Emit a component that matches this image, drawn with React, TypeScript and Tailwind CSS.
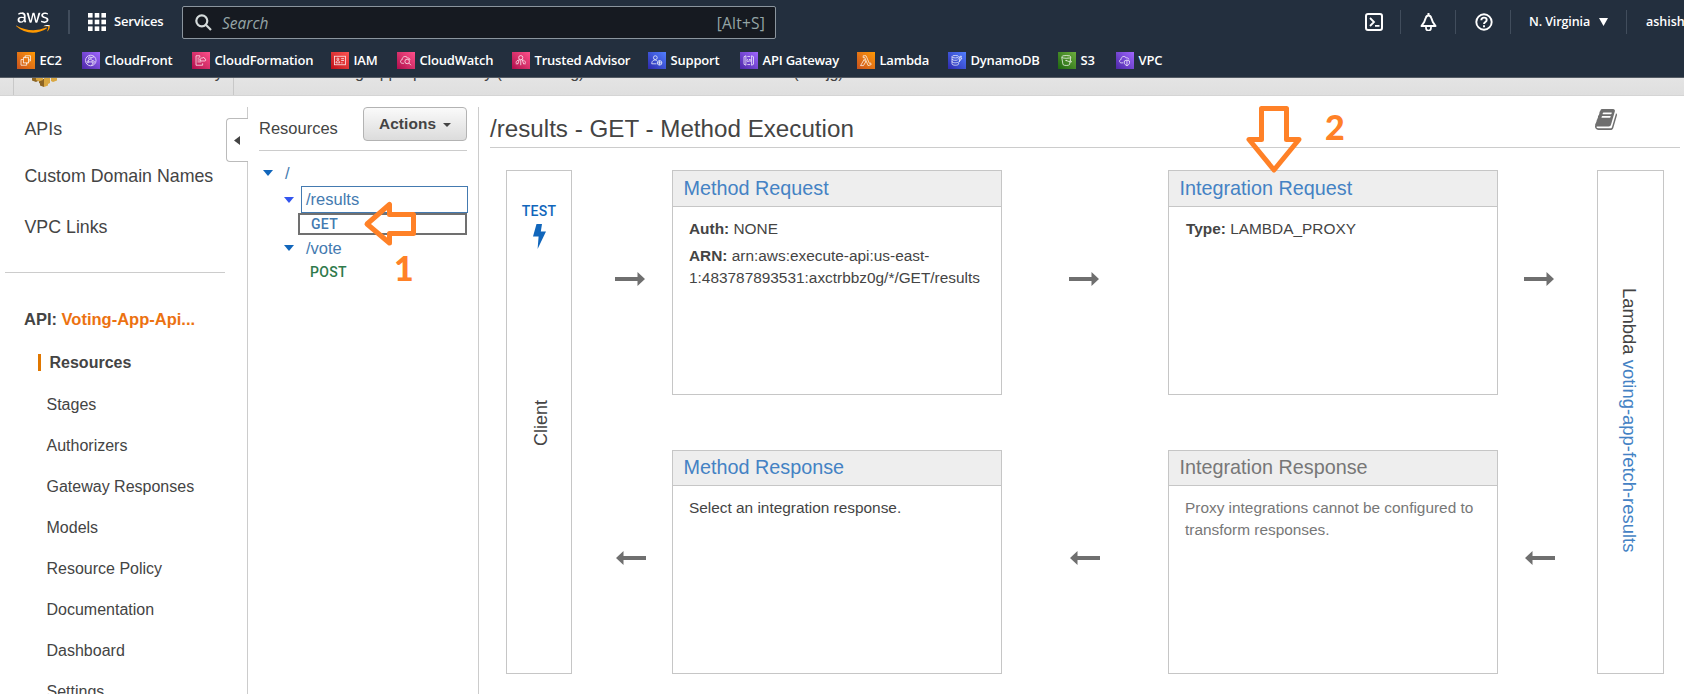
import React from "react";
import { FaAws } from "react-icons/fa";

const ember = "font-['Open_Sans','Noto_Sans',sans-serif]";

type Service = { name: string; cell: string; tone: string; glyph: React.ReactNode };

const services: Service[] = [
  {
    name: "EC2", cell: "w-[65px]", tone: "from-[#c8511b] to-[#ff9900]",
    glyph: <><rect x="6.5" y="6" width="5.5" height="5.5" /><path d="M6.5 8H4v6h6v-2.5M8.5 6V4H14v5.500h-2M8 6V4.800M10 11.500v1.200M12 8h1.200" /></>,
  },
  {
    name: "CloudFront", cell: "w-[110px]", tone: "from-[#4d27a8] to-[#a166ff]",
    glyph: <><circle cx="9" cy="9" r="5.600" /><circle cx="8" cy="6.500" r="1.300" /><circle cx="6" cy="10.500" r="1" /><circle cx="11.500" cy="10.500" r="1.300" /><path d="M9 7.500l2 2M7.300 7.700L6.400 9.500M7 10.500h3M9.300 6.200l3-1.200M11 12l-1 2.400" /></>,
  },
  {
    name: "CloudFormation", cell: "w-[139px]", tone: "from-[#b0084d] to-[#ff4f8b]",
    glyph: <><path d="M8 4H4v10h7v-2M5.500 6.500h2M5.500 8.500h3M5.500 10.500h4M8 4v2" /><path d="M9 9.500c-1.500-2 .5-3.500 1.500-3C11.500 5 13.500 6 13.300 7.300c1.500.3 1.200 2.200 0 2.200z" /></>,
  },
  {
    name: "IAM", cell: "w-[66px]", tone: "from-[#bd0816] to-[#ff5252]",
    glyph: <><rect x="3.500" y="4.500" width="11.500" height="9" /><circle cx="7" cy="7.500" r="1.100" /><path d="M5 11.500c0-3 4-3 4 0zM10.500 7h3M10.500 9h3M10.500 11.500h1.500" /></>,
  },
  {
    name: "CloudWatch", cell: "w-[115px]", tone: "from-[#b0084d] to-[#ff4f8b]",
    glyph: <><path d="M7 12H5.500c-2.500 0-2.800-3.500-.3-3.800C5 4.500 9.500 3.500 11 6.500c1.800-.4 2.500.8 2.300 2" /><circle cx="10.500" cy="10" r="2.400" /><path d="M12.300 11.700l2.300 2.300" /></>,
  },
  {
    name: "Trusted Advisor", cell: "w-[136px]", tone: "from-[#b0084d] to-[#ff4f8b]",
    glyph: <><circle cx="9" cy="6" r="2.200" /><path d="M7.500 8L6 12.500M10.500 8l1.500 4.500M9 8.200V14M4 11.500c0-2 2-3 3-3M14 11.500c0-2-2-3-3-3M3.700 12.500h2.500M11.800 12.500h2.500" /></>,
  },
  {
    name: "Support", cell: "w-[92px]", tone: "from-[#2e27ad] to-[#527fff]",
    glyph: <><circle cx="7.500" cy="6" r="2" /><path d="M3.700 12.500c0-4.500 4-4.700 5.800-3M3.700 12.500h5" /><circle cx="12" cy="11.500" r="2.400" /><path d="M12 9.200v4.500M9.800 11.500h4.500" /></>,
  },
  {
    name: "API Gateway", cell: "w-[117px]", tone: "from-[#4d27a8] to-[#a166ff]",
    glyph: <><path d="M6 4L4 5v8l2 1zM12 4l2 1v8l-2 1zM7.500 4.700h3M7.500 13.300h3M8 7.500L7.200 9 8 10.500M10 7.500L8.800 10.500M10.300 7.500l.8 1.500-.8 1.500" /></>,
  },
  {
    name: "Lambda", cell: "w-[91px]", tone: "from-[#c8511b] to-[#ff9900]",
    glyph: <path d="M6.300 4h3l3.500 8 1.400-.4.500 1.800-3.200 1L8 6H6.300zM7.400 7.800L3.500 14.400H6.600l2.300-3.800z" />,
  },
  {
    name: "DynamoDB", cell: "w-[110px]", tone: "from-[#2e27ad] to-[#527fff]",
    glyph: <><ellipse cx="7.500" cy="5" rx="3.500" ry="1.300" /><path d="M4 5v7.500c0 2 7 2 7 0V11M4 7.500c0 1.600 5 1.600 6 .8M4 10c0 1.700 5 1.700 6.500.8M12.500 4.500l-1.500 3h1.500l-1 3 3-4H13l1-2z" /></>,
  },
  {
    name: "S3", cell: "w-[58px]", tone: "from-[#1b660f] to-[#6cae3e]",
    glyph: <><ellipse cx="8.500" cy="5.200" rx="4.800" ry="1.500" /><path d="M3.700 5.500l1.300 7.800c1 1.300 6 1.300 7 0l1.300-7.800M8.500 9l4 1.500c2 .6 2-.4.300-1.500" /><circle cx="8.300" cy="9" r=".4" /></>,
  },
  {
    name: "VPC", cell: "w-[60px]", tone: "from-[#4d27a8] to-[#a166ff]",
    glyph: <><path d="M7.500 11.500H5.300c-2.300 0-2.500-3.300-.2-3.500C4.900 4.500 9.300 3.600 10.600 6.300c1.900-.3 2.700.5 2.700 1.700" /><path d="M11.300 8.500l2.700 1v2c0 1.300-1 2.200-2.700 3-1.700-.8-2.700-1.700-2.700-3v-2zM11.300 8.500v6" /></>,
  },
];

const Divider = ({ className = "w-px" }: { className?: string }) => (
  <div className={`h-6 shrink-0 bg-[#414d5c] ${className}`} />
);

function TopBar() {
  return (
    <div className="flex h-10 items-start">
      <div className="ml-[16px] mt-[9px] w-[35px] shrink-0">
        <svg width="0" height="0" className="block">
          <defs>
            <linearGradient id="awsTone" x1="0" y1="0" x2="0" y2="1">
              <stop offset="0.67" stopColor="#ffffff" />
              <stop offset="0.67" stopColor="#ff9900" />
            </linearGradient>
          </defs>
        </svg>
        <FaAws className="block h-[27px] w-[34px] fill-[url(#awsTone)]" />
      </div>
      <Divider className="ml-[17px] mt-[10px] w-[2px]" />
      <svg className="ml-[18px] mt-[13px] h-[18px] w-[18px] shrink-0 fill-white" viewBox="0 0 18 18">
        {[0, 6.7, 13.400].map((y) => [0, 6.7, 13.400].map((x) => <rect key={`${x}-${y}`} x={x} y={y} width="4.600" height="4.600" />))}
      </svg>
      <span className="ml-2 mt-[11px] w-[68px] shrink-0 whitespace-nowrap text-[13px] font-semibold leading-[21px] tracking-[-0.200px]">Services</span>
      <div className="mt-[6px] flex h-[33px] w-[594px] shrink-0 items-center rounded-[2px] border border-[#8b959e] bg-[#161a21] pl-3 pr-[10px]">
        <svg className="h-[17px] w-[17px] fill-none stroke-[#d5dbdb]" viewBox="0 0 17 17" strokeWidth="2.200">
          <circle cx="6.800" cy="6.800" r="5.500" />
          <path d="M10.800 10.800L16 16" />
        </svg>
        <span className="ml-[10px] text-[15.500px] italic leading-5 text-[#95a5a6]">Search</span>
        <span className="ml-auto text-[15.500px] leading-5 tracking-[0.200px] text-[#95a5a6]">[Alt+S]</span>
      </div>
      <svg className="ml-[589px] mt-[13px] h-[18px] w-[18px] shrink-0 fill-none stroke-white" viewBox="0 0 18 18" strokeWidth="2">
        <rect x="1" y="1" width="16" height="16" rx="2" />
        <path d="M5 5l4 4-4 4M10 12.800h4.500" strokeWidth="1.800" />
      </svg>
      <Divider className="ml-[17px] mt-[10px] w-px" />
      <svg className="ml-[19px] mt-[13px] h-[18px] w-[17px] shrink-0 fill-none stroke-white" viewBox="0 0 17 18" strokeWidth="2" strokeLinejoin="round">
        <path d="M8.500 0v2.500M1.500 13h14l-2.700-4L11.300 5q-.8-2.500-2.800-2.500T5.700 5L4.200 9z" />
        <path d="M6 14v1a2.500 2.500 0 0 0 5 0v-1" strokeWidth="1.700" />
      </svg>
      <Divider className="ml-[18px] mt-[10px] w-px" />
      <svg className="ml-[19px] mt-[13px] h-[18px] w-[18px] shrink-0 fill-none stroke-white" viewBox="0 0 18 18" strokeWidth="1.900">
        <circle cx="9" cy="9" r="7.700" />
        <path d="M6.300 7.200c0-3.500 5.400-3.300 5.400-.2 0 2-2.700 1.900-2.700 4M9 12.200v2" />
      </svg>
      <Divider className="ml-[17px] mt-[10px] w-px" />
      <span className="ml-[18px] mt-[11px] w-[65px] shrink-0 whitespace-nowrap text-[12.500px] font-semibold leading-[21px] tracking-[-0.100px]">N. Virginia</span>
      <svg className="ml-[5px] mt-[18px] h-[8px] w-[9px] shrink-0 fill-white" viewBox="0 0 9 8"><path d="M0 0h9L4.500 8z" /></svg>
      <Divider className="ml-[18px] mt-[10px] w-px" />
      <span className="ml-[19px] mt-[11px] shrink-0 whitespace-nowrap text-[12.500px] font-semibold leading-[21px]">ashish</span>
    </div>
  );
}

function Favorites() {
  return (
    <div className="mt-[12px] flex pl-[17px]">
      {services.map((s) => (
        <div key={s.name} className={`flex shrink-0 items-center ${s.cell}`}>
          <svg className={`h-[17px] w-[17.500px] shrink-0 bg-linear-to-tr fill-none stroke-white/85 ${s.tone}`} viewBox="0 0 18 18" strokeWidth="0.900">
            {s.glyph}
          </svg>
          <span className="ml-[5px] whitespace-nowrap text-[13px] font-semibold leading-[17px] tracking-[-0.200px]">{s.name}</span>
        </div>
      ))}
    </div>
  );
}

function Breadcrumbs() {
  return (
    <div className="flex h-[18px] items-start overflow-hidden border-b border-[#d5d5d5] bg-linear-to-b from-[#e4e4e4] to-[#dfdfdf] text-base leading-5 text-[#444]">
      <div className="ml-[13px] h-[18px] w-px bg-[#c8c8c8]" />
      <svg className="ml-[18px] h-[9px] w-[25px]" viewBox="0 0 25 9">
        <path d="M0 0h6v3L4 4 0 2.500zM7 1h5v8l-4-1.500V5L7 5.500z" fill="#8c6423" />
        <path d="M19 0h6v2.500l-4 1.500-2-1zM12 0h6v5l-2 1v1.500L12 9z" fill="#d9a741" />
        <path d="M4 0h7v2l-4 1.500L4 2z" fill="#d9a741" />
      </svg>
      <span className="-mt-[15px] ml-[10px] w-[166px] whitespace-nowrap">Amazon API Gateway</span>
      <div className="h-[18px] w-px bg-[#c8c8c8]" />
      <span className="-mt-[15px] ml-[18px] w-[68px] whitespace-nowrap">APIs</span>
      <span className="-mt-[15px] w-[275px] whitespace-nowrap tracking-[-0.100px]">Voting-App-Api Gateway (axctrbbz0g)</span>
      <span className="-mt-[15px] ml-[22px] w-[122px] whitespace-nowrap">Resources</span>
      <span className="-mt-[15px] whitespace-nowrap tracking-[-0.200px]">/results (zw8jg)</span>
    </div>
  );
}

const sections = ["Stages", "Authorizers", "Gateway Responses", "Models", "Resource Policy", "Documentation", "Dashboard", "Settings"];

function Sidebar() {
  return (
    <nav className="flex h-full w-[226px] shrink-0 flex-col text-[#444]">
      <div className="mt-[21px] pl-[24.500px] text-[17.800px] leading-6">
        <div>APIs</div>
        <div className="mt-[23px] whitespace-nowrap">Custom Domain Names</div>
        <div className="mt-[27px]">VPC Links</div>
      </div>
      <div className="ml-[5px] mt-[33px] h-px w-[220px] shrink-0 bg-[#ccc]" />
      <div className="mt-[34px] whitespace-nowrap pl-[24px] text-[16.500px] font-bold leading-6">
        API: <span className="text-[#ec7211]">Voting-App-Api...</span>
      </div>
      <div className="mt-[11px] flex h-[41px] shrink-0 items-center pl-[38px]">
        <span className="h-[17px] w-[3px] bg-[#e07700]" />
        <span className="ml-[8.500px] text-base font-bold">Resources</span>
      </div>
      <div className="pt-px">
        {sections.map((s) => (
          <div key={s} className="flex h-[41px] shrink-0 items-center pl-[46.500px] text-base">{s}</div>
        ))}
      </div>
    </nav>
  );
}

function CollapseRail() {
  return (
    <div className="mt-[11px] flex w-[22px] shrink-0 flex-col">
      <div className="h-[11px] border-r border-[#ccc]" />
      <div className="flex h-[44px] items-center rounded-l-[4px] border-y border-l border-[#bbb] pl-[7px]">
        <svg className="h-[9px] w-[6px] fill-[#444]" viewBox="0 0 6 9"><path d="M6 0v9L0 4.500z" /></svg>
      </div>
      <div className="flex-1 border-r border-[#ccc]" />
    </div>
  );
}

const Caret = ({ className }: { className: string }) => (
  <svg className={`h-[6px] w-[10px] shrink-0 ${className}`} viewBox="0 0 10 6"><path d="M0 0h10L5 6z" /></svg>
);

const verb = "font-[Roboto,sans-serif] text-sm font-medium tracking-[0.300px]";

function ResourceTree() {
  return (
    <section className="mt-[11px] flex w-[231px] shrink-0 flex-col border-r border-[#ccc] pl-[11px] text-[#444]">
      <div className="flex h-[44px] w-[208px] items-start border-b border-[#ccc]">
        <span className="mt-[9px] text-[16.500px] leading-6">Resources</span>
        <button className="ml-auto flex h-[34px] w-[104px] items-center rounded-[4px] border border-[#b3b3b3] bg-linear-to-b from-[#fafafa] to-[#dcdcdc] pb-px pl-[15px] text-[15.400px] font-bold tracking-[0.100px]">
          Actions
          <svg className="ml-[7px] mt-[3px] h-[4px] w-[8px] fill-[#444]" viewBox="0 0 8 4"><path d="M0 0h8L4 4z" /></svg>
        </button>
      </div>
      <div className="mt-[9px] flex h-[26px] items-center pl-1 text-[16.500px] text-[#447ab0]">
        <Caret className="fill-[#1166bb]" />
        <span className="ml-3">/</span>
      </div>
      <div className="flex h-[27px] items-center pl-[25px] text-[16.500px] text-[#447ab0]">
        <Caret className="fill-[#3355ee]" />
        <span className="ml-[7px] flex h-[27px] w-[167px] items-center border border-[#447ab0] pl-1">/results</span>
      </div>
      <div className={`ml-[39px] flex h-[22px] w-[169px] items-center border-2 border-[#707070] pb-px pl-[11px] text-[#447ab0] ${verb}`}>GET</div>
      <div className="mt-[1px] flex h-[24px] items-center pl-[25px] text-[16.500px] text-[#447ab0]">
        <Caret className="fill-[#1166bb]" />
        <span className="ml-3">/vote</span>
      </div>
      <div className={`flex h-[23px] items-center pl-[51px] text-[#2f7a4c] ${verb}`}>POST</div>
    </section>
  );
}

const Arrow = ({ left = false, className }: { left?: boolean; className: string }) => (
  <div className={`flex items-center ${left ? "h-[216px]" : "h-[217px]"} ${className}`}>
    <svg className={`h-[14px] w-[30px] fill-[#6f6f6f] ${left ? "rotate-180" : ""}`} viewBox="0 0 30 14">
      <path d="M0 5h22.500V0L30 7l-7.500 7V9H0z" />
    </svg>
  </div>
);

function Card({ title, head = "h-[36px]", muted = false, children }: { title: string; head?: string; muted?: boolean; children: React.ReactNode }) {
  return (
    <div className={`flex flex-col border border-[#c6c6c6] ${muted ? "text-[#777]" : "text-[#444]"}`}>
      <div className={`flex shrink-0 items-center border-b border-[#c6c6c6] bg-[#eee] pl-[10.500px] text-[19.800px] ${head} ${muted ? "" : "text-[#4482c4]"}`}>{title}</div>
      <div className="px-4 pt-[11px] text-[15.400px] leading-[22px]">{children}</div>
    </div>
  );
}

const BookIcon = () => (
  <svg className="mr-[63px] mt-[2px] h-[21px] w-[22px] fill-[#6f6f6f]" viewBox="0 128 1664 1536" preserveAspectRatio="none">
    <path d="M1639 478q40 57 18 129l-275 906q-19 64-76.500 107.500t-122.500 43.500h-923q-77 0-148.500-53.500t-99.500-131.500q-24-67-2-127 0-4 3-27t4-37q1-8-3-21.500t-3-19.500q2-11 8-21t16.500-23.500 16.500-23.500q23-38 45-91.500t30-91.500q3-10 .5-30t-.5-28q3-11 17-28t17-23q21-36 42-92t25-90q1-9-2.500-32t.5-28q4-13 22-30.500t22-22.500q19-26 42.500-84.500t27.500-96.500q1-8-3-25.500t-2-26.500q2-8 9-18t18-23 17-21q8-12 16.500-30.500t15-35 16-36 19.500-32 26.500-23.500 36-11.500 47.500 5.500l-1 3q38-9 51-9h761q74 0 114 56t18 130l-274 906q-36 119-71.500 153.500t-128.500 34.500h-869q-27 0-38 15-11 16-1 43 24 70 144 70h923q29 0 56-15.500t35-41.500l300-987q7-22 5-57 38 15 59 43zm-1064 2q-4 13 2 22.500t20 9.500h608q13 0 25.500-9.500t16.500-22.500l21-64q4-13-2-22.500t-20-9.500h-608q-13 0-25.500 9.500t-16.500 22.500zm-83 256q-4 13 2 22.500t20 9.500h608q13 0 25.500-9.500t16.500-22.500l21-64q4-13-2-22.500t-20-9.500h-608q-13 0-25.500 9.500t-16.500 22.500z" />
  </svg>
);

function MethodExecution() {
  return (
    <main className="flex min-w-0 flex-1 flex-col pl-[11px] text-[#444]">
      <div className="mt-[11px] flex h-[41px] w-[1190px] items-start justify-between border-b border-[#ccc]">
        <h1 className="mt-[6px] whitespace-nowrap text-[24.200px] leading-[31px]">/results - GET - Method Execution</h1>
        <BookIcon />
      </div>
      <div className="ml-4 mt-[22px] grid grid-cols-[66px_100px_330px_166px_330px_99px_67px] grid-rows-[225px_224px] gap-y-[55px]">
        <div className="row-span-2 flex flex-col items-center border border-[#c6c6c6]">
          <span className={`mt-[31px] leading-[18px] text-[#1166bb] ${verb}`}>TEST</span>
          <svg className="mt-[4px] h-[25px] w-[13px] fill-[#1166bb]" viewBox="0 0 13 25"><path d="M3.500 0h5.500L7.800 7.500H13L4.600 25l1-12.500H0z" /></svg>
          <span className="ml-[3px] mt-[151px] rotate-180 text-[18px] leading-5 [writing-mode:vertical-rl]">Client</span>
        </div>
        <Arrow className="pl-[43px]" />
        <Card title="Method Request">
          <div><b>Auth:</b> NONE</div>
          <div className="mt-[5px] whitespace-nowrap"><b>ARN:</b> arn:aws:execute-api:us-east-<br />1:483787893531:axctrbbz0g/*/GET/results</div>
        </Card>
        <Arrow className="pl-[67px]" />
        <Card title="Integration Request">
          <div className="pl-px"><b>Type:</b> LAMBDA_PROXY</div>
        </Card>
        <Arrow className="pl-[26px]" />
        <div className="row-span-2 flex justify-center border border-[#c6c6c6]">
          <span className="ml-[-4px] mt-[117px] whitespace-nowrap text-[18.450px] leading-5 [writing-mode:vertical-rl]">
            Lambda <span className="text-[#4482c4]">voting-app-fetch-results</span>
          </span>
        </div>
        <Arrow left className="pl-[44px]" />
        <Card title="Method Response" head="h-[35px]">Select an integration response.</Card>
        <Arrow left className="pl-[68px]" />
        <Card title="Integration Response" head="h-[35px]" muted>
          <div className="whitespace-nowrap">Proxy integrations cannot be configured to<br />transform responses.</div>
        </Card>
        <Arrow left className="pl-[27px]" />
      </div>
    </main>
  );
}

function Annotations() {
  return (
    <div className="pointer-events-none absolute inset-0 font-[Lato,sans-serif] text-[34px] font-black leading-[34px] text-[#ff8127]">
      <svg className="absolute left-[360px] top-[198px] h-[52px] w-[60px] fill-none stroke-[#ff8127]" viewBox="360 198 60 52" strokeWidth="5" strokeLinejoin="round">
        <path d="M413.500 214.500V233.500H389.500V243L367 224 389.500 204.500V214.500z" />
      </svg>
      <span className="absolute left-[394px] top-[251px]">1</span>
      <svg className="absolute left-[1240px] top-[100px] h-[76px] w-[66px] fill-none stroke-[#ff8127]" viewBox="1240 100 66 76" strokeWidth="5" strokeLinejoin="round">
        <path d="M1261.500 108.500H1286.500V139.500H1299L1274 170 1249 139.500H1261.500z" />
      </svg>
      <span className="absolute left-[1325px] top-[110px]">2</span>
    </div>
  );
}

export default function App() {
  return (
    <div className="relative flex h-[694px] w-[1684px] flex-col overflow-hidden bg-white font-['Liberation_Sans',Arial,sans-serif]">
      <header className={`h-[78px] shrink-0 overflow-hidden border-b border-[#545b64] bg-[#232f3e] text-white ${ember}`}>
        <TopBar />
        <Favorites />
      </header>
      <Breadcrumbs />
      <div className="flex min-h-0 flex-1 overflow-hidden">
        <Sidebar />
        <CollapseRail />
        <ResourceTree />
        <MethodExecution />
      </div>
      <Annotations />
    </div>
  );
}
